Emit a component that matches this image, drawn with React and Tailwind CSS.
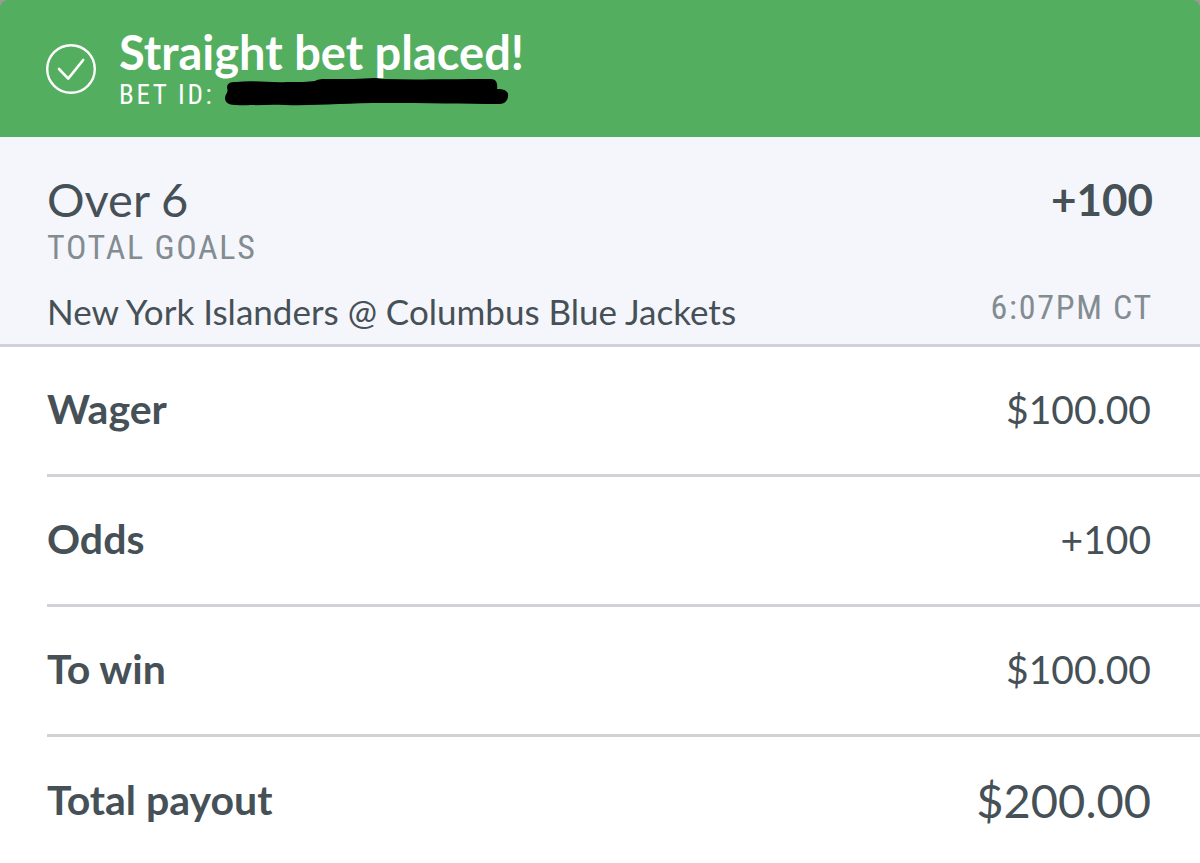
const rows = [
  { label: "Wager", value: "$100.00" },
  { label: "Odds", value: "+100" },
  { label: "To win", value: "$100.00" },
  { label: "Total payout", value: "$200.00", total: true },
]

function CheckIcon() {
  return (
    <svg
      viewBox="0 0 50 50"
      className="size-[50px] shrink-0"
      fill="none"
      stroke="#ffffff"
      strokeLinecap="round"
      strokeLinejoin="round"
      aria-hidden="true"
    >
      <circle cx="25" cy="25" r="23.8" strokeWidth="2.4" />
      <path d="M13 25 L22.2 34.6 L37.2 16" strokeWidth="2.6" />
    </svg>
  )
}

// Hand-drawn marker stroke over the bet number
function Redaction() {
  return (
    <svg viewBox="0 0 284 34" className="h-[34px] w-[284px] shrink-0" fill="#000000" aria-hidden="true">
      <path d="M2 10 C2 5 5 4 11 4 C30 2 45 5 62 4 C72 4 84 4 90 3 C94 1 97 1 103 1 C122 1 136 1 150 0 C153 0 154 1 158 1 C190 2 220 1 266 1 C271 1 273 5 272 11 C279 11 284 13 283 18 C283 22 280 26 275 26 C240 26 200 25 160 25 C120 25 90 28 60 27 C42 26 28 28 10 27 C3 27 0 24 0 20 C0 16 4 14 2 10 Z" />
    </svg>
  )
}

function Header() {
  return (
    <header className="flex items-center gap-[23px] rounded-t-lg bg-[#54ae5f] px-[46px] pt-[26px] pb-[25px] text-white">
      <CheckIcon />
      <div>
        <h1 className="text-[47px] leading-[52px] font-bold">Straight bet placed!</h1>
        <p className="flex items-center gap-[10px] font-['Roboto_Condensed','Liberation_Sans_Narrow',sans-serif] text-[27px] leading-[34px] tracking-widest">
          BET ID:
          <Redaction />
        </p>
      </div>
    </header>
  )
}

function Selection() {
  return (
    <section className="flex justify-between border-b-3 border-[#d1d2d9] bg-[#f5f6fb] px-[47px] pt-9 pb-[11px]">
      <div>
        <h2 className="text-[47px] leading-[52px]">Over 6</h2>
        <p className="font-['Roboto_Condensed','Liberation_Sans_Narrow',sans-serif] text-[34px] leading-[44px] tracking-wider text-[#838c91]">
          TOTAL GOALS
        </p>
        <p className="mt-5 text-[35px] leading-[44px]">New York Islanders @ Columbus Blue Jackets</p>
      </div>
      <div className="flex flex-col justify-between text-right">
        <p className="text-[44px] leading-[52px] font-bold">+100</p>
        <p className="pb-1 font-['Roboto_Condensed','Liberation_Sans_Narrow',sans-serif] text-[34px] leading-[44px] tracking-wider text-[#838c91]">
          6:07PM CT
        </p>
      </div>
    </section>
  )
}

export default function App() {
  return (
    <div className="bg-[#9a9a9a] font-[Lato,sans-serif] text-[#465057]">
      <Header />
      <Selection />
      <dl className="bg-white pl-[47px]">
        {rows.map((row) => (
          <div
            key={row.label}
            className="flex h-[130px] items-center justify-between border-b-3 border-[#d0d2d5] pr-[49px] pb-1 last:h-[126px] last:border-b-0 last:pb-0"
          >
            <dt className="text-[41px] leading-[48px] font-bold">{row.label}</dt>
            <dd className={row.total ? "text-[47px] leading-[48px]" : "text-[39px] leading-[48px]"}>{row.value}</dd>
          </div>
        ))}
      </dl>
    </div>
  )
}
